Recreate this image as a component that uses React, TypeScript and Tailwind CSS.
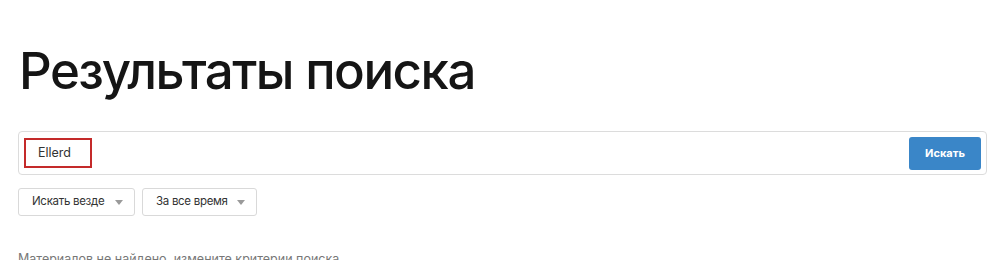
export default function App() {
  return (
    <div className="w-[1008px] h-[260px] overflow-hidden bg-white font-['Inter',sans-serif]">
      <div className="px-[18px]">
        <h1 className="pt-[40px] text-[51px] leading-[62px] font-medium tracking-[-1.5px] text-[#151515] pl-[1px]">
          Результаты поиска
        </h1>

        <div className="mt-[29px] w-[969px] h-[44px] rounded-[4px] border border-[#dcdcdc] flex items-center justify-between pl-[5px] pr-[5px]">
          <div className="w-[68px] h-[30px] border-2 border-[#c42a2a] flex items-center pl-[12px] text-[12.5px] text-[#333]">
            Ellerd
          </div>
          <button className="w-[72px] h-[33px] rounded-[3px] bg-[#3a86c8] text-white text-[11px] font-bold">
            Искать
          </button>
        </div>

        <div className="mt-[13px] flex gap-[7px]">
          <Select label="Искать везде" width="w-[117px]" />
          <Select label="За все время" width="w-[115px]" />
        </div>

        <p className="mt-[34px] text-[12.5px] text-[#777] whitespace-nowrap">
          Материалов не найдено, измените критерии поиска
        </p>
      </div>
    </div>
  )
}

function Select({ label, width }: { label: string; width: string }) {
  return (
    <div
      className={`${width} h-[28px] rounded-[3px] border border-[#d9d9d9] flex items-center justify-between pl-[13px] pr-[11px] text-[11.5px] tracking-[-0.3px] text-[#333] whitespace-nowrap`}
    >
      <span>{label}</span>
      <svg width="8" height="5" viewBox="0 0 8 5" className="shrink-0">
        <path d="M0 0h8L4 5z" fill="#9a9a9a" />
      </svg>
    </div>
  )
}
